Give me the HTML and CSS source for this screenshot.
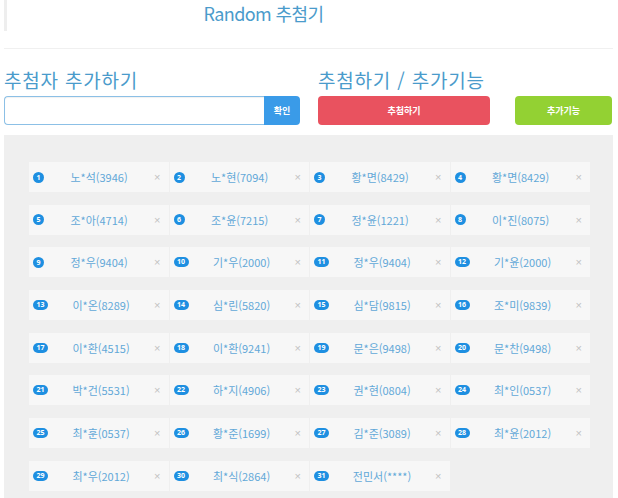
FILE: index.html
```html
<!DOCTYPE html>
<html lang="ko">
  <head>
    <meta charset="UTF-8" />
    <meta name="viewport" content="width=device-width, initial-scale=1.0" />
    <title>Random 추첨기</title>
    <link rel="stylesheet" href="styles.css">
  </head>
  <body>
    <div class="page">
      <div class="title-box">
        <h1>Random 추첨기</h1>
      </div>
      <div class="divider"></div>

      <div class="controls">
        <div class="col-left">
          <h2>추첨자 추가하기</h2>
          <div class="input-group">
            <input type="text" id="nameInput" />
            <button class="btn-ok">확인</button>
          </div>
        </div>
        <div class="col-right">
          <h2>추첨하기 / 추가기능</h2>
          <div class="actions">
            <button class="btn-draw">추첨하기</button>
            <button class="btn-extra">추가기능</button>
          </div>
        </div>
      </div>

      <div class="panel">
        <div class="grid" id="list"></div>
      </div>
    </div>

    <script>
      // 추첨자 목록
      const people = [
        "노*석(3946)", "노*현(7094)", "황*면(8429)", "황*면(8429)",
        "조*아(4714)", "조*윤(7215)", "정*윤(1221)", "이*진(8075)",
        "정*우(9404)", "기*우(2000)", "정*우(9404)", "기*윤(2000)",
        "이*온(8289)", "심*린(5820)", "심*담(9815)", "조*미(9839)",
        "이*환(4515)", "이*환(9241)", "문*은(9498)", "문*찬(9498)",
        "박*건(5531)", "하*지(4906)", "권*현(0804)", "최*인(0537)",
        "최*훈(0537)", "황*준(1699)", "김*준(3089)", "최*윤(2012)",
        "최*우(2012)", "최*식(2864)", "전민서(****)"
      ];

      const list = document.getElementById("list");
      people.forEach((name, i) => {
        const card = document.createElement("div");
        card.className = "card";
        const num = i + 1;
        card.innerHTML =
          `<span class="badge${num > 9 ? " wide" : ""}">${num}</span>` +
          `<span class="name">${name}</span>` +
          `<span class="remove">×</span>`;
        list.appendChild(card);
      });
    </script>
  </body>
</html>
```

FILE: styles.css
```css
body {
  margin: 0;
  background-color: #ffffff;
  font-family: "Noto Sans CJK KR", "Noto Sans", sans-serif;
}
.page {
  padding: 0 5px 0 4px;
}
.title-box {
  height: 31px;
  width: 513px;
  border-left: 3px solid #eeeeee;
}
h1 {
  margin: 0;
  font-size: 18px;
  line-height: 26px;
  font-weight: normal;
  color: #4a9bcb;
  text-align: center;
  letter-spacing: -0.6px;
}
.divider {
  margin-top: 17px;
  height: 1px;
  background-color: #f0f0f0;
}
.controls {
  display: flex;
  gap: 18px;
  margin-top: 19px;
}
.col-left {
  width: 296px;
}
.col-right {
  flex: 1;
}
h2 {
  margin: 0 0 4px;
  font-size: 19px;
  line-height: 24px;
  font-weight: normal;
  color: #4a9bcb;
  letter-spacing: 0.8px;
  word-spacing: 0;
}
.input-group {
  display: flex;
  height: 29px;
}
.input-group input {
  flex: 1;
  min-width: 0;
  margin: 0;
  border: 1px solid #8cc0e6;
  border-right: none;
  border-radius: 4px 0 0 4px;
  box-shadow: inset 0 1px 1px rgba(0, 0, 0, 0.06);
  outline: none;
}
.btn-ok {
  width: 36px;
  border: none;
  border-radius: 0 4px 4px 0;
  background-color: #3a9be8;
  color: white;
  font-family: inherit;
  font-size: 9px;
  font-weight: bold;
  padding: 0;
}
.actions {
  display: flex;
  justify-content: space-between;
  height: 29px;
  padding-right: 1px;
}
.actions button {
  border: none;
  border-radius: 4px;
  color: white;
  font-family: inherit;
  font-size: 9px;
  font-weight: bold;
  padding: 0;
}
.btn-draw {
  width: 172px;
  background-color: #e9525f;
}
.btn-extra {
  width: 97px;
  background-color: #93d133;
}
.panel {
  margin-top: 10px;
  background-color: #efefef;
  padding: 27px 23px 20px 25px;
}
.grid {
  display: grid;
  grid-template-columns: repeat(4, 139.5px);
  column-gap: 1px;
  row-gap: 12.7px;
}
.card {
  display: flex;
  align-items: center;
  height: 30px;
  padding: 0 8px 0 4px;
  background-color: #f7f7f7;
}
.badge {
  width: 11px;
  height: 11px;
  border-radius: 6px;
  background-color: #1e8fe1;
  color: white;
  font-family: "Noto Sans", sans-serif;
  font-size: 7px;
  font-weight: bold;
  line-height: 11px;
  text-align: center;
}
.badge.wide {
  width: 15px;
  height: 10px;
  line-height: 10px;
}
.name {
  flex: 1;
  text-align: center;
  font-size: 11px;
  color: #62a8d7;
}
.remove {
  font-family: "Liberation Sans", sans-serif;
  font-size: 11px;
  color: #c2c2c2;
}
```
